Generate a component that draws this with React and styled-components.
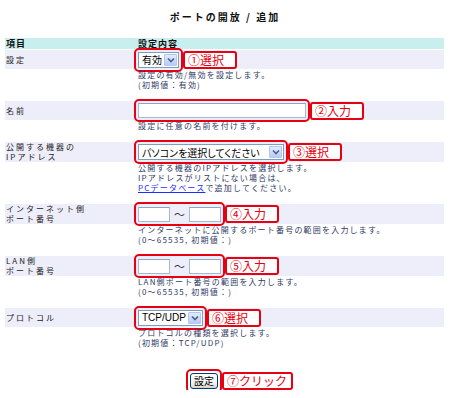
import React from "react";
import styled, { createGlobalStyle } from "styled-components";

const GlobalStyle = createGlobalStyle`
  body {
    margin: 0;
    background: #fff;
    font-family: "Noto Sans CJK JP", "Liberation Sans", sans-serif;
  }
`;

const Page = styled.div`
  width: 450px;
  padding-top: 11px;
`;

const Title = styled.h1`
  margin: 0;
  text-align: center;
  font-size: 10px;
  line-height: 12px;
  font-weight: bold;
  letter-spacing: 2px;
  color: #111;
`;

const Table = styled.div`
  width: 439px;
  margin: 15px 0 0 5px;
`;

const HeadRow = styled.div`
  display: grid;
  grid-template-columns: 133px 1fr;
  height: 11px;
  margin-bottom: 1px;
  background: #c9eeee;
  font-size: 9px;
  line-height: 11px;
  font-weight: bold;
  letter-spacing: 1px;
  color: #111;

  span:first-child {
    padding-left: 1px;
  }
`;

const Band = styled.div`
  display: grid;
  grid-template-columns: 133px 1fr;
  align-items: center;
  min-height: 19px;
  background: #eeeefb;
`;

const Label = styled.div`
  padding-left: 1px;
  font-size: 8px;
  line-height: 10px;
  letter-spacing: 2px;
  color: #222;
`;

const Control = styled.div`
  display: flex;
  align-items: center;
`;

const Note = styled.p`
  margin: 1px 0 11px 133px;
  font-size: 8px;
  line-height: 10px;
  letter-spacing: 1.2px;
  color: #2f3a66;

  a {
    color: #1a2cff;
    text-decoration: underline;
  }
`;

const Marked = styled.span`
  display: inline-flex;
  align-items: center;
  outline: 2px solid #e60012;
  outline-offset: 2px;
  border-radius: 1px;
`;

const Callout = styled.span`
  display: inline-flex;
  align-items: center;
  box-sizing: border-box;
  height: 18px;
  min-width: 54px;
  margin-left: 4px;
  padding: 0 4px 0 3px;
  border: 2px solid #e60012;
  border-radius: 3px;
  background: #fff;
  color: #e60012;
  font-size: 12px;
  line-height: 1;
`;

const Dropdown = styled.span`
  display: inline-flex;
  align-items: center;
  justify-content: space-between;
  box-sizing: border-box;
  width: ${(p) => p.$w}px;
  height: 16px;
  padding: 0 1px 0 3px;
  border: 1px solid #7f9db9;
  background: #fff;
  font-family: "Liberation Sans", "Noto Sans CJK JP", sans-serif;
  font-size: 10px;
  font-feature-settings: "palt";
  color: #000;
`;

const Arrow = styled.span`
  display: flex;
  align-items: center;
  justify-content: center;
  box-sizing: border-box;
  width: 13px;
  height: 12px;
  border: 1px solid #b3c6f3;
  border-radius: 1px;
  background: linear-gradient(#e2ebfe, #b8cbf7);
`;

const TextBox = styled.input`
  box-sizing: border-box;
  width: ${(p) => p.$w}px;
  height: 15px;
  margin: 0;
  padding: 0;
  border: 1px solid #a5b9d5;
  border-top-color: #8ea5c6;
  background: #fff;
`;

const Tilde = styled.span`
  margin: 0 4px;
  font-size: 11px;
  color: #333;
`;

const Actions = styled.div`
  display: flex;
  align-items: center;
  margin-top: 24px;
  padding-left: 190px;
`;

const Submit = styled.button`
  box-sizing: border-box;
  width: 28px;
  height: 16px;
  padding: 0;
  border: 1px solid #003c74;
  border-radius: 3px;
  background: linear-gradient(#ffffff, #f0efea 70%, #d8d3c8);
  font-family: "Noto Sans CJK JP", sans-serif;
  font-size: 10px;
  line-height: 1;
  color: #000;
`;

const Chevron = () => (
  <svg width="8" height="6" viewBox="0 0 8 6">
    <path d="M1 1.5 L4 4.5 L7 1.5" fill="none" stroke="#4d6185" strokeWidth="1.6" />
  </svg>
);

const Select = ({ width, children }) => (
  <Dropdown $w={width}>
    <span>{children}</span>
    <Arrow>
      <Chevron />
    </Arrow>
  </Dropdown>
);

const PortRange = () => (
  <Marked>
    <TextBox $w={32} />
    <Tilde>～</Tilde>
    <TextBox $w={32} />
  </Marked>
);

const App = () => {
  return (
    <Page>
      <GlobalStyle />
      <Title>ポートの開放 / 追加</Title>
      <Table>
        <HeadRow>
          <span>項目</span>
          <span>設定内容</span>
        </HeadRow>

        <Band>
          <Label>設定</Label>
          <Control>
            <Marked>
              <Select width={41}>有効</Select>
            </Marked>
            <Callout>①選択</Callout>
          </Control>
        </Band>
        <Note>
          設定の有効/無効を設定します。
          <br />
          (初期値：有効)
        </Note>

        <Band>
          <Label>名前</Label>
          <Control>
            <Marked>
              <TextBox $w={168} />
            </Marked>
            <Callout>②入力</Callout>
          </Control>
        </Band>
        <Note>設定に任意の名前を付けます。</Note>

        <Band>
          <Label>
            公開する機器の
            <br />
            IPアドレス
          </Label>
          <Control>
            <Marked>
              <Select width={146}>パソコンを選択してください</Select>
            </Marked>
            <Callout>③選択</Callout>
          </Control>
        </Band>
        <Note>
          公開する機器のIPアドレスを選択します。
          <br />
          IPアドレスがリストにない場合は、
          <br />
          <a>PCデータベース</a>で追加してください。
        </Note>

        <Band>
          <Label>
            インターネット側
            <br />
            ポート番号
          </Label>
          <Control>
            <PortRange />
            <Callout>④入力</Callout>
          </Control>
        </Band>
        <Note>
          インターネットに公開するポート番号の範囲を入力します。
          <br />
          (0～65535, 初期値：)
        </Note>

        <Band>
          <Label>
            LAN側
            <br />
            ポート番号
          </Label>
          <Control>
            <PortRange />
            <Callout>⑤入力</Callout>
          </Control>
        </Band>
        <Note>
          LAN側ポート番号の範囲を入力します。
          <br />
          (0～65535, 初期値：)
        </Note>

        <Band>
          <Label>プロトコル</Label>
          <Control>
            <Marked>
              <Select width={65}>TCP/UDP</Select>
            </Marked>
            <Callout>⑥選択</Callout>
          </Control>
        </Band>
        <Note>
          プロトコルの種類を選択します。
          <br />
          (初期値：TCP/UDP)
        </Note>
      </Table>

      <Actions>
        <Marked>
          <Submit>設定</Submit>
        </Marked>
        <Callout>⑦クリック</Callout>
      </Actions>
    </Page>
  );
};

export default App;
